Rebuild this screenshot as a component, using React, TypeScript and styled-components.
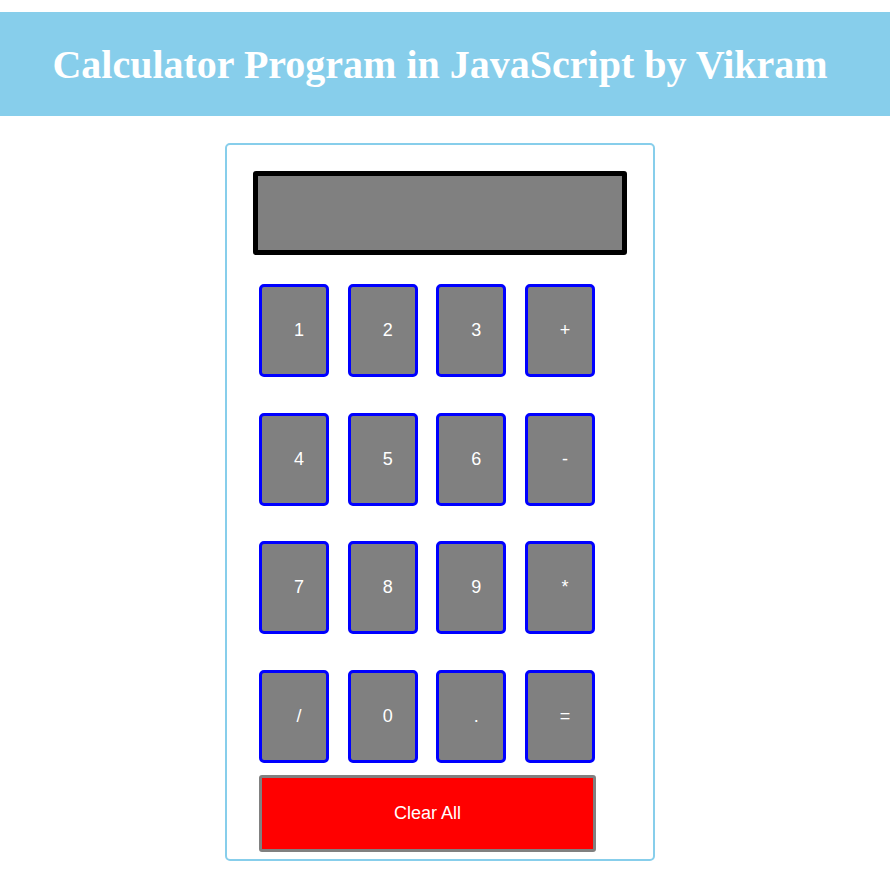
import React, { useState } from "react";
import styled, { createGlobalStyle } from "styled-components";

const GlobalStyle = createGlobalStyle`
  html, body { margin: 0; padding: 0; background: #ffffff; }
  body { font-family: "Liberation Serif", "Times New Roman", serif; }
`;

const Page = styled.div`
  padding-top: 12px;
  display: flex;
  flex-direction: column;
  align-items: flex-start;
`;

const Header = styled.h1`
  align-self: stretch;
  margin: 0;
  height: 104px;
  padding-right: 10px;
  display: flex;
  align-items: center;
  justify-content: center;
  background: #87ceeb;
  color: #ffffff;
  font-family: "Liberation Serif", "Times New Roman", serif;
  font-weight: bold;
  font-size: 40px;
`;

const Calculator = styled.div`
  margin: 27px 0 0 225px;
  box-sizing: border-box;
  width: 430px;
  height: 718px;
  border: 2px solid #87ceeb;
  border-radius: 5px;
  padding: 26px 0 0 26px;
  display: flex;
  flex-direction: column;
`;

const Display = styled.div`
  box-sizing: border-box;
  width: 374px;
  height: 84px;
  border: 5px solid #000000;
  border-radius: 3px;
  background: #808080;
  color: #ffffff;
  font-family: "Liberation Sans", Arial, sans-serif;
  font-size: 28px;
  display: flex;
  align-items: center;
  justify-content: flex-end;
  padding: 0 10px;
`;

const Keypad = styled.div`
  margin: 29px 0 0 6px;
  display: grid;
  grid-template-columns: repeat(4, 70px);
  grid-auto-rows: 93px;
  column-gap: 18.67px;
  row-gap: 35.67px;
`;

const Key = styled.button`
  box-sizing: border-box;
  width: 70px;
  height: 93px;
  border: 3px solid #0000ff;
  border-radius: 5px;
  background: #808080;
  color: #ffffff;
  font-family: "Liberation Sans", Arial, sans-serif;
  font-size: 18px;
  padding: 0 0 0 10px;
  cursor: pointer;
`;

const ClearButton = styled.button`
  margin: 12px 0 0 6px;
  box-sizing: border-box;
  width: 337px;
  height: 77px;
  border: 3px solid #808080;
  border-radius: 3px;
  background: #ff0000;
  color: #ffffff;
  font-family: "Liberation Sans", Arial, sans-serif;
  font-size: 18px;
  cursor: pointer;
`;

const keys = ["1", "2", "3", "+", "4", "5", "6", "-", "7", "8", "9", "*", "/", "0", ".", "="];

export default function App() {
  const [value, setValue] = useState("");

  const press = (k: string) => {
    if (k === "=") {
      try {
        // eslint-disable-next-line no-new-func
        const r = Function(`"use strict"; return (${value || "0"})`)();
        setValue(String(r));
      } catch {
        setValue("Error");
      }
    } else {
      setValue((v) => v + k);
    }
  };

  return (
    <>
      <GlobalStyle />
      <Page>
        <Header>Calculator Program in JavaScript by Vikram</Header>
        <Calculator>
          <Display>{value}</Display>
          <Keypad>
            {keys.map((k) => (
              <Key key={k} onClick={() => press(k)}>
                {k}
              </Key>
            ))}
          </Keypad>
          <ClearButton onClick={() => setValue("")}>Clear All</ClearButton>
        </Calculator>
      </Page>
    </>
  );
}
